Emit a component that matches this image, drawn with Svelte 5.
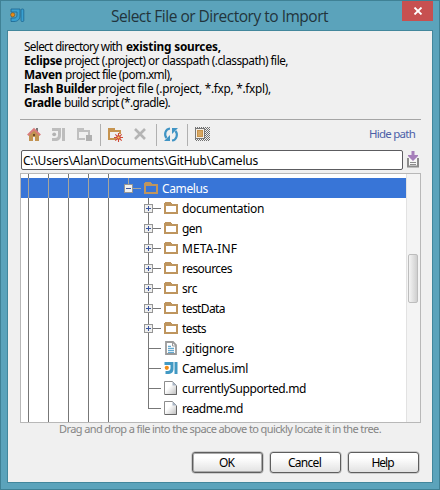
<script>
  const intro = [
    [{ t: 'Select directory with', w: 98, gap: 4 }, { t: 'existing sources,', w: 95, b: true }],
    [{ t: 'Eclipse', w: 38, gap: 2, b: true }, { t: 'project (.project) or classpath (.classpath) file,', w: 224 }],
    [{ t: 'Maven', w: 38, gap: 3, b: true }, { t: 'project file (pom.xml),', w: 107 }],
    [{ t: 'Flash Builder', w: 72, gap: 2, b: true }, { t: 'project file (.project, *.fxp, *.fxpl),', w: 173 }],
    [{ t: 'Gradle', w: 37, gap: 3, b: true }, { t: 'build script (*.gradle).', w: 106 }]
  ];
  const rows = [
    { name: 'Camelus', w: 46, kind: 'root', icon: 'folder' },
    { name: 'documentation', w: 82, kind: 'dir', icon: 'folder' },
    { name: 'gen', w: 20, kind: 'dir', icon: 'folder' },
    { name: 'META-INF', w: 55, kind: 'dir', icon: 'folder' },
    { name: 'resources', w: 50, kind: 'dir', icon: 'folder' },
    { name: 'src', w: 15, kind: 'dir', icon: 'folder' },
    { name: 'testData', w: 43, kind: 'dir', icon: 'folder' },
    { name: 'tests', w: 24, kind: 'dir', icon: 'folder' },
    { name: '.gitignore', w: 52, kind: 'file', icon: 'text' },
    { name: 'Camelus.iml', w: 66, kind: 'file', icon: 'ji' },
    { name: 'currentlySupported.md', w: 124, kind: 'file', icon: 'page' },
    { name: 'readme.md', w: 61, kind: 'last', icon: 'page' }
  ];
  const guides = [7, 27, 47, 67, 87];

  // Spreads the letters of a label over the given width.
  function fit(node, width) {
    const natural = node.getBoundingClientRect().width;
    node.style.letterSpacing = (width - natural) / node.textContent.length + 'px';
  }
</script>

{#snippet ji(blue, dot)}
  <path d="M1 1h9v7c0 3-2 5-6 5H2v-3h2c2 0 3-1 3-3V4H1z" fill={blue} />
  <path d="M11 1h3v12h-3z" fill={blue} />
  <circle cx="3.3" cy="6.8" r="2.1" fill={dot} />
{/snippet}

{#snippet folder(color)}
  <path fill-rule="evenodd" fill={color} d="M0 1h1V0h6v1h1v1h6v10H0zM2 4v6h10V4z" />
{/snippet}

<div class="window">
  <header>
    <svg class="logo" width="15" height="15" viewBox="0 0 15 15">
      <path d="M1 1h9v7c0 3-2 5.500-6 5.500H1V10h3c2 0 3-1 3-3V4H1z" fill="#3aa0d0" stroke="#1c6690" stroke-width=".8" />
      <rect x="11" y="1" width="2.800" height="12.500" rx="1" fill="#3aa0d0" stroke="#1c6690" stroke-width=".8" />
      <circle cx="2.700" cy="6.800" r="2.100" fill="#e98b16" stroke="#70501f" stroke-width=".6" />
    </svg>
    <h1><span use:fit={217}>Select File or Directory to Import</span></h1>
    <button class="close" aria-label="Close">
      <svg width="10" height="8" viewBox="0 0 10 8"><path d="M1.500 .5l7 7m0-7l-7 7" stroke="#fff" stroke-width="1.800" /></svg>
    </button>
  </header>

  <main>
    <div class="intro">
      {#each intro as line}
        <div class="line">
          {#each line as part}
            <span class:bold={part.b} style:margin-right="{part.gap ?? 0}px" use:fit={part.w}>{part.t}</span>
          {/each}
        </div>
      {/each}
    </div>

    <div class="toolbar">
      <svg width="280" height="28" viewBox="0 0 280 28">
        <g transform="translate(7 8)">
          <path d="M2 6l5-5 5 5v7H8V9H6v4H2z" fill="#c29352" />
          <path d="M9 0h2v4H9z" fill="#777" />
          <path d="M.8 7.200L7 1.200l6.200 6" fill="none" stroke="#d97c7c" stroke-width="2" />
          <path d="M6 6h2v2H6z" fill="#6f4a24" />
        </g>
        <g transform="translate(31 8)">
          <path d="M1 0h9v7c0 4-2 6-6 6H1v-3h3c2 0 3-1 3-3V3H1zM11 0h3v13h-3z" fill="#bdbdbd" />
          <circle cx="3.200" cy="6.300" r="1.900" fill="#b2b2b2" />
        </g>
        <g transform="translate(57 8)">
          <path d="M0 0h7v2h6v5h-2V4H2v6h6v2H0z" fill="#c0c0c0" />
          <path d="M9 7h6v6H9z" fill="#b0b0b0" />
        </g>
        <path d="M80.500 4v22M136.500 4v22M167.500 4v22" stroke="#b0b0b0" />
        <g transform="translate(88 8)">
          <path d="M0 0h7v2h6v4h-2V4H2v6h6v2H0z" fill="#c69450" />
          <path d="M10.500 5v9M6 9.500h9M7.300 6.300l6.400 6.400m0-6.400l-6.400 6.400" stroke="#cf4a36" stroke-width="1.100" />
          <circle cx="10.500" cy="9.500" r="2.300" fill="#cf4a36" />
          <circle cx="10.500" cy="9.500" r="1.100" fill="#f5c860" />
        </g>
        <path d="M115 9l10 10m0-10l-10 10" stroke="#b4b4b4" stroke-width="2.600" />
        <g transform="translate(144 7)" fill="none" stroke="#4094c4" stroke-width="2.200">
          <path d="M6 1.500C1 2 0 8 2.500 11" />
          <path d="M8 13.500c5-.5 6-6.500 3.500-9.500" />
          <path d="M0 14h6V8zM14 1H8v6z" fill="#4094c4" stroke="none" />
        </g>
        <defs>
          <pattern id="dots" width="2" height="2" patternUnits="userSpaceOnUse">
            <path d="M0 0h1v1H0zM1 1h1v1H1z" fill="#707070" />
          </pattern>
        </defs>
        <g shape-rendering="crispEdges">
          <path d="M175 7h15v14h-15z" fill="url(#dots)" />
          <path d="M175.500 8.500h9v10h-9z" fill="#f4eee4" stroke="#777" />
          <path d="M177 10h6v7h-6z" fill="#c8924a" />
          <path d="M178 11h4v5h-4z" fill="#d6a763" />
        </g>
      </svg>
      <a href="#path"><span use:fit={46}>Hide path</span></a>
    </div>

    <div class="path">
      <div class="field"><span use:fit={235}>C:\Users\Alan\Documents\GitHub\Camelus</span></div>
      <svg width="12" height="17" viewBox="0 0 12 17">
        <path d="M1 7v8.500h10V7" fill="#f7f7f7" stroke="#8c8c8c" stroke-width="2" />
        <path d="M3 11.500h6M3 13.500h6" stroke="#8c8c8c" />
        <path d="M4.500 0h3v4H11v1L6 10 1 5V4h3.500z" fill="#a67fba" />
      </svg>
    </div>

    <div class="tree">
      <div class="rows">
        <svg class="top" width="140" height="4" shape-rendering="crispEdges">
          {#each guides as x}<rect {x} y="0" width="1" height="4" fill="#777" />{/each}
        </svg>
        {#each rows as row}
          {@const root = row.kind === 'root'}
          <div class="row" class:selected={root}>
            <svg width={root ? 120 : 140} height="20" shape-rendering="crispEdges">
              {#each guides as x}<rect {x} y="0" width="1" height="20" fill={root ? '#a5a59e' : '#777'} />{/each}
              {#if root}
                <rect x="107" width="1" height="6" fill="#a5a59e" />
                <rect x="112" y="10" width="8" height="1" fill="#a5a59e" />
              {:else}
                <rect x="127" width="1" height={row.kind === 'last' ? 11 : 20} fill="#777" />
                <rect x="127" y="10" width="13" height="1" fill="#777" />
              {/if}
              {#if root || row.kind === 'dir'}
                <g transform="translate({root ? 103 : 123} 6)">
                  <rect x=".5" y=".5" width="8" height="8" fill="#f0f0ee" stroke="#959595" />
                  <rect x="2" y="4" width="5" height="1" fill="#3a55a0" />
                  {#if !root}<rect x="4" y="2" width="1" height="5" fill="#3a55a0" />{/if}
                </g>
              {/if}
            </svg>
            <svg class="icon" width="15" height="16" viewBox="0 0 15 16">
              {#if row.icon === 'folder'}
                <g transform="translate(0 2)">
                  {#if !root}<path d="M1 3h12v8H1z" fill="#fff" />{/if}
                  {@render folder('#be955e')}
                </g>
              {:else if row.icon === 'text'}
                <path d="M2 2h7l3 3v9H2z" fill="#fff" stroke="#9b9b9b" stroke-width="1.800" />
                <path d="M8.500 2v4H12" fill="none" stroke="#9b9b9b" />
                <path d="M4 6.500h3M4 8.500h6M4 10.500h6M4 12.500h6" transform="translate(0 -.2)" stroke="#3f94c5" />
              {:else if row.icon === 'ji'}
                <g transform="translate(-.5 1)">{@render ji('#4299c3', '#ef8c18')}</g>
              {:else}
                <defs>
                  <linearGradient id="paper" x2="1" y2="1">
                    <stop offset=".4" stop-color="#fff" /><stop offset="1" stop-color="#bbb" />
                  </linearGradient>
                </defs>
                <path d="M.5 1.500h8l4 4v9H.5z" fill="url(#paper)" stroke="#8d8d8d" />
                <path d="M12.500 6v8.500H1" fill="none" stroke="#666" />
                <path d="M8.500 1.500v4h4z" fill="#a9b6c6" />
              {/if}
            </svg>
            <span class="name" use:fit={row.w}>{row.name}</span>
          </div>
        {/each}
        <svg class="top" width="140" height="4" shape-rendering="crispEdges">
          {#each guides as x}<rect {x} y="0" width="1" height="4" fill="#777" />{/each}
        </svg>
      </div>
      <div class="scroll"><div class="thumb"></div></div>
    </div>

    <p class="hint"><span use:fit={322}>Drag and drop a file into the space above to quickly locate it in the tree.</span></p>

    <footer>
      <button class="default"><span use:fit={15}>OK</span></button>
      <button><span use:fit={33}>Cancel</span></button>
      <button><span use:fit={22}>Help</span></button>
    </footer>
  </main>
</div>

<style>
  :global(body) { margin: 0; }
  .window, .window * { box-sizing: border-box; }
  .window {
    width: 440px; height: 490px; padding: 0 7px 7px 6px;
    background: #5ba3bb; border: 1px solid #3f8195;
    font: 12px/14px "Noto Sans", "Open Sans", sans-serif; color: #000;
    overflow: hidden;
  }
  span { white-space: pre; display: inline-block; flex: none; }
  header { height: 29px; display: flex; align-items: flex-start; margin-right: -1px; }
  .logo { margin: 7px 0 0 3px; flex: none; }
  h1 { margin: 5px 0 0 86px; font: 15.500px/21px "Open Sans", "Noto Sans", sans-serif; color: #22343c; flex: 1; }
  button { font: inherit; padding: 0; }
  .close { width: 31px; height: 20px; background: #c75050; border: 0; display: flex; align-items: center; justify-content: center; }
  main {
    height: 453px; width: 426px; background: #f0f0f0; border: 1px solid #42879c;
    padding: 8px 11px 0 12px; display: flex; flex-direction: column;
  }
  .intro { padding-left: 4px; height: 80px; font-size: 11.800px; }
  .line { display: flex; height: 14px; }
  .bold { font-weight: 700; }
  .toolbar { height: 30px; border-top: 1px solid #a5a5a5; display: flex; justify-content: space-between; align-items: flex-start; }
  a { color: #4c5fa8; text-decoration: none; margin: 7px 6px 0 0; font-size: 11.500px; }
  .path { display: flex; height: 24px; padding: 1px 2px 0 1px; justify-content: space-between; }
  .field { width: 382px; height: 20px; border: 1px solid #5c5c60; border-radius: 2px; background: #fff; padding: 3px 0 0 1px; }
  .path > svg { margin-top: 1px; }
  .tree { height: 250px; border: 1px solid #b8b8b8; background: #fff; display: flex; }
  .rows { flex: 1; overflow: hidden; }
  .top { display: block; }
  .row { display: flex; align-items: center; height: 20px; }
  .row svg { flex: none; }
  .icon { margin-left: 3px; margin-right: 3px; }
  .name { padding-top: 2px; }
  .selected { background: #3875d7; color: #fff; }
  .scroll { width: 14px; background: #f4f4f4; border-left: 1px solid #e2e2e2; padding: 80px 2px 0 1px; }
  .thumb { height: 49px; border: 1px solid #bdbdbd; border-radius: 2px; background: linear-gradient(90deg, #f4f4f4, #cfcfcf); }
  .hint { margin: 0; height: 29px; padding: 0 0 0 39px; color: #858585; font-size: 11px; line-height: 11px; }
  footer { display: flex; justify-content: flex-end; gap: 7px; padding-right: 2px; }
  footer button {
    width: 71px; height: 21px; border: 1px solid #5e5e5e; border-radius: 3px;
    background: linear-gradient(#fff 25%, #e2e2e2); color: #000;
    box-shadow: 0 0 0 .5px #aaa; line-height: 17px; padding-right: 2px;
  }
  footer .default { box-shadow: inset 0 0 0 1px #aaa, 0 0 0 .5px #aaa; }
</style>
